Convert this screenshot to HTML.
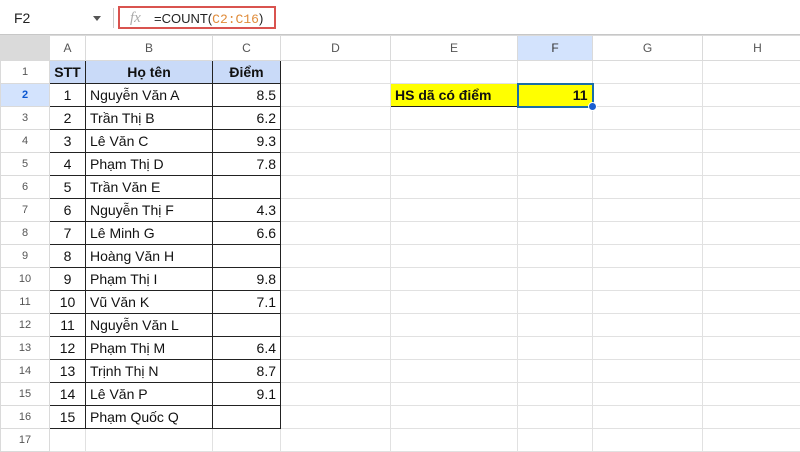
<!DOCTYPE html>
<html><head><meta charset="utf-8"><style>
*{margin:0;padding:0;box-sizing:border-box}
body{width:800px;height:450px;overflow:hidden;background:#fff;font-family:"Liberation Sans",Arial,sans-serif;position:relative}
.fb{position:absolute;left:0;top:0;width:800px;height:35px;background:#fff;border-bottom:1px solid #c7c7c7}
.nm{position:absolute;left:14px;top:10px;font-size:14px;color:#222}
.dd{position:absolute;left:93px;top:16px;border-left:4px solid transparent;border-right:4px solid transparent;border-top:5px solid #555}
.sep{position:absolute;left:113px;top:8px;width:1px;height:20px;background:#ccc}
.box{position:absolute;left:118px;top:6px;width:158px;height:23px;border:2px solid #d9534f}
.fx{position:absolute;left:10px;top:2px;font-family:"Liberation Serif",serif;font-style:italic;font-size:15px;color:#aaa}
.fm{position:absolute;left:34px;top:3px;font-size:13px;color:#222}
.fm span{color:#e08c3a;font-family:"Liberation Mono",monospace;font-size:13px}
table{position:absolute;left:0;top:35px;border-collapse:collapse;table-layout:fixed;width:812px}
td{border:1px solid #e1e1e1;height:23px;font-size:14px;color:#111;padding:0 4px;white-space:nowrap;overflow:hidden}
tr.h td{height:25px;background:#fff;color:#555;font-size:12px;text-align:center;border-color:#dadada}
td.rh{background:#fff;color:#555;font-size:11px;text-align:center;border-color:#dadada}
td.c{text-align:center}td.r{text-align:right}
td.k{border:1px solid #222}
td.th{background:#c9daf8;font-weight:bold;text-align:center;border:1px solid #222}
.sel{background:#d3e3fd!important;color:#0b57d0!important;font-weight:bold}
.y{background:#ffff00;font-weight:bold;border:1px solid #222}
</style></head><body>
<div class="fb"><div class="nm">F2</div><div class="dd"></div><div class="sep"></div>
<div class="box"><div class="fx">fx</div><div class="fm">=COUNT(<span>C2:C16</span>)</div></div></div>
<table>
<colgroup><col style="width:49px"><col style="width:36px"><col style="width:127px"><col style="width:68px"><col style="width:110px"><col style="width:127px"><col style="width:75px"><col style="width:110px"><col style="width:110px"></colgroup>
<tr class="h"><td style="background:#dadada"></td><td>A</td><td>B</td><td>C</td><td>D</td><td>E</td><td class="sel" style="font-weight:normal;color:#333!important">F</td><td>G</td><td>H</td></tr>
<tr><td class="rh">1</td><td class="th">STT</td><td class="th">Họ tên</td><td class="th">Điểm</td><td></td><td></td><td></td><td></td><td></td></tr>
<tr><td class="rh sel">2</td><td class="k c">1</td><td class="k">Nguyễn Văn A</td><td class="k r">8.5</td><td></td><td class="y">HS dã có điểm</td><td class="y r" style="border:2px solid #1a6ea8">11</td><td></td><td></td></tr>
<tr><td class="rh">3</td><td class="k c">2</td><td class="k">Trần Thị B</td><td class="k r">6.2</td><td></td><td></td><td></td><td></td><td></td></tr>
<tr><td class="rh">4</td><td class="k c">3</td><td class="k">Lê Văn C</td><td class="k r">9.3</td><td></td><td></td><td></td><td></td><td></td></tr>
<tr><td class="rh">5</td><td class="k c">4</td><td class="k">Phạm Thị D</td><td class="k r">7.8</td><td></td><td></td><td></td><td></td><td></td></tr>
<tr><td class="rh">6</td><td class="k c">5</td><td class="k">Trần Văn E</td><td class="k r"></td><td></td><td></td><td></td><td></td><td></td></tr>
<tr><td class="rh">7</td><td class="k c">6</td><td class="k">Nguyễn Thị F</td><td class="k r">4.3</td><td></td><td></td><td></td><td></td><td></td></tr>
<tr><td class="rh">8</td><td class="k c">7</td><td class="k">Lê Minh G</td><td class="k r">6.6</td><td></td><td></td><td></td><td></td><td></td></tr>
<tr><td class="rh">9</td><td class="k c">8</td><td class="k">Hoàng Văn H</td><td class="k r"></td><td></td><td></td><td></td><td></td><td></td></tr>
<tr><td class="rh">10</td><td class="k c">9</td><td class="k">Phạm Thị I</td><td class="k r">9.8</td><td></td><td></td><td></td><td></td><td></td></tr>
<tr><td class="rh">11</td><td class="k c">10</td><td class="k">Vũ Văn K</td><td class="k r">7.1</td><td></td><td></td><td></td><td></td><td></td></tr>
<tr><td class="rh">12</td><td class="k c">11</td><td class="k">Nguyễn Văn L</td><td class="k r"></td><td></td><td></td><td></td><td></td><td></td></tr>
<tr><td class="rh">13</td><td class="k c">12</td><td class="k">Phạm Thị M</td><td class="k r">6.4</td><td></td><td></td><td></td><td></td><td></td></tr>
<tr><td class="rh">14</td><td class="k c">13</td><td class="k">Trịnh Thị N</td><td class="k r">8.7</td><td></td><td></td><td></td><td></td><td></td></tr>
<tr><td class="rh">15</td><td class="k c">14</td><td class="k">Lê Văn P</td><td class="k r">9.1</td><td></td><td></td><td></td><td></td><td></td></tr>
<tr><td class="rh">16</td><td class="k c">15</td><td class="k">Phạm Quốc Q</td><td class="k r"></td><td></td><td></td><td></td><td></td><td></td></tr>
<tr><td class="rh">17</td><td></td><td></td><td></td><td></td><td></td><td></td><td></td><td></td></tr>
</table>
<div style="position:absolute;left:588px;top:102px;width:9px;height:9px;border-radius:50%;background:#1a5fd0;border:1px solid #fff"></div>
</body></html>
